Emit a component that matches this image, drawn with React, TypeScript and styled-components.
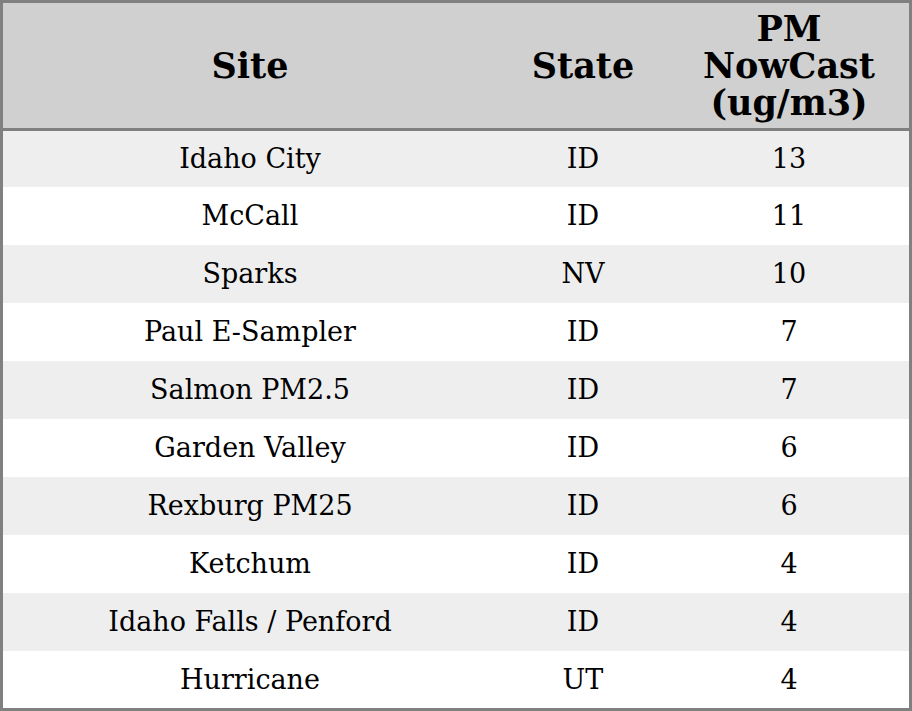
import React from "react";
import styled, { createGlobalStyle } from "styled-components";

const GlobalStyle = createGlobalStyle`
  html, body {
    margin: 0;
    padding: 0;
    background: #ffffff;
  }
`;

const Wrapper = styled.div`
  width: 912px;
  box-sizing: border-box;
  border: 3px solid #808080;
  font-family: "DejaVu Serif", serif;
  color: #000;
`;

const Table = styled.table`
  width: 906px;
  border-collapse: separate;
  border-spacing: 0;
  table-layout: fixed;
`;

const HeadCell = styled.th<{ width: number }>`
  width: ${({ width }) => width}px;
  height: 128px;
  padding: 0 4px;
  box-sizing: border-box;
  background: #d0d0d0;
  border-bottom: 3px solid #808080;
  font-size: 35px;
  font-weight: bold;
  line-height: 37px;
  text-align: center;
  vertical-align: middle;
`;

const Row = styled.tr<{ shaded: boolean }>`
  height: 58px;
  background: ${({ shaded }) => (shaded ? "#eeeeee" : "#ffffff")};

  &:first-child {
    height: 56px;
  }
  &:last-child {
    height: 57px;
  }
`;

const Cell = styled.td`
  padding: 0 4px;
  font-size: 27px;
  line-height: 32px;
  text-align: center;
  vertical-align: middle;
`;

const rows = [
  { site: "Idaho City", state: "ID", pm: 13 },
  { site: "McCall", state: "ID", pm: 11 },
  { site: "Sparks", state: "NV", pm: 10 },
  { site: "Paul E-Sampler", state: "ID", pm: 7 },
  { site: "Salmon PM2.5", state: "ID", pm: 7 },
  { site: "Garden Valley", state: "ID", pm: 6 },
  { site: "Rexburg PM25", state: "ID", pm: 6 },
  { site: "Ketchum", state: "ID", pm: 4 },
  { site: "Idaho Falls / Penford", state: "ID", pm: 4 },
  { site: "Hurricane", state: "UT", pm: 4 },
];

export default function App() {
  return (
    <>
      <GlobalStyle />
      <Wrapper>
        <Table>
          <thead>
            <tr>
              <HeadCell width={494}>Site</HeadCell>
              <HeadCell width={172}>State</HeadCell>
              <HeadCell width={240}>
                PM
                <br />
                NowCast
                <br />
                (ug/m3)
              </HeadCell>
            </tr>
          </thead>
          <tbody>
            {rows.map((r, i) => (
              <Row key={r.site} shaded={i % 2 === 0}>
                <Cell>{r.site}</Cell>
                <Cell>{r.state}</Cell>
                <Cell>{r.pm}</Cell>
              </Row>
            ))}
          </tbody>
        </Table>
      </Wrapper>
    </>
  );
}
